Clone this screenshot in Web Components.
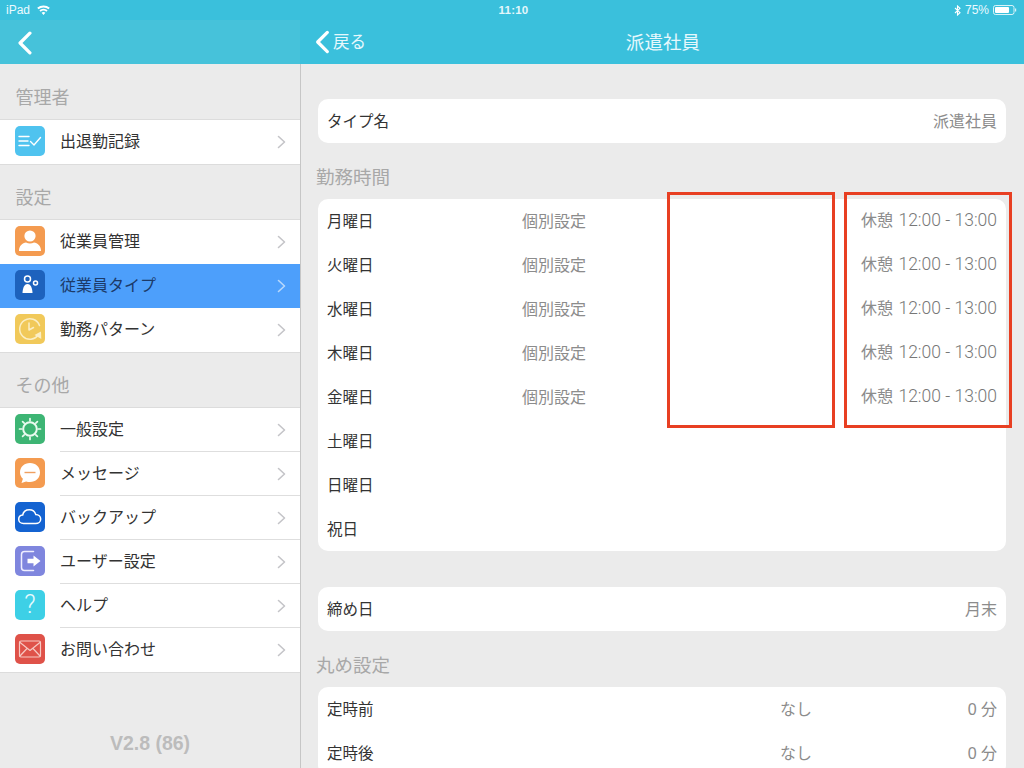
<!DOCTYPE html>
<html lang="ja">
<head>
<meta charset="utf-8">
<title>派遣社員</title>
<style>
  html, body { margin: 0; height: 100%; background: #ebebeb; }
  body { font-family: "Liberation Sans", "Noto Sans CJK JP", sans-serif; overflow: hidden; }
</style>
</head>
<body>
<app-shell>
  <status-bar slot="status"></status-bar>

  <nav-left slot="nav-left"></nav-left>
  <nav-right slot="nav-right" title-text="派遣社員" back="戻る"></nav-right>

  <side-menu slot="side">
    <side-section heading="管理者">
      <side-row icon="record" plain>出退勤記録</side-row>
    </side-section>
    <side-section heading="設定">
      <side-row icon="person" plain>従業員管理</side-row>
      <side-row icon="type" selected>従業員タイプ</side-row>
      <side-row icon="clock" plain>勤務パターン</side-row>
    </side-section>
    <side-section heading="その他">
      <side-row icon="gear">一般設定</side-row>
      <side-row icon="message">メッセージ</side-row>
      <side-row icon="cloud">バックアップ</side-row>
      <side-row icon="door">ユーザー設定</side-row>
      <side-row icon="help">ヘルプ</side-row>
      <side-row icon="mail" plain>お問い合わせ</side-row>
    </side-section>
    <version-label>V2.8 (86)</version-label>
  </side-menu>

  <detail-pane slot="main">
    <set-card>
      <set-row>タイプ名<span slot="end">派遣社員</span></set-row>
    </set-card>
    <set-heading>勤務時間</set-heading>
    <set-card>
      <set-row>月曜日<span slot="mid">個別設定</span><break-time slot="end" range="12:00 - 13:00"></break-time></set-row>
      <set-row>火曜日<span slot="mid">個別設定</span><break-time slot="end" range="12:00 - 13:00"></break-time></set-row>
      <set-row>水曜日<span slot="mid">個別設定</span><break-time slot="end" range="12:00 - 13:00"></break-time></set-row>
      <set-row>木曜日<span slot="mid">個別設定</span><break-time slot="end" range="12:00 - 13:00"></break-time></set-row>
      <set-row>金曜日<span slot="mid">個別設定</span><break-time slot="end" range="12:00 - 13:00"></break-time></set-row>
      <set-row>土曜日</set-row>
      <set-row>日曜日</set-row>
      <set-row>祝日</set-row>
    </set-card>
    <set-card style="margin-top:36px">
      <set-row>締め日<span slot="end">月末</span></set-row>
    </set-card>
    <set-heading>丸め設定</set-heading>
    <set-card style="--mid-col:453px">
      <set-row>定時前<span slot="mid">なし</span><span slot="end">0 分</span></set-row>
      <set-row>定時後<span slot="mid">なし</span><span slot="end">0 分</span></set-row>
    </set-card>
    <red-mark style="left:366px"></red-mark>
    <red-mark style="left:543px"></red-mark>
  </detail-pane>
</app-shell>

<script>
const CHEVRON_BACK = (h, w) => `<svg width="${w}" height="${h}" viewBox="0 0 14 22" fill="none" stroke="#fff" stroke-width="3" stroke-linecap="round" stroke-linejoin="round"><path d="M11.5 2 L2.5 11 L11.5 20"/></svg>`;

const ICONS = {
  record: { bg: '#4fc3ef', svg: `<g fill="none" stroke="#fff" stroke-width="1.4" stroke-linecap="round"><path d="M4 10.5h10M4 15h9M4 19.5h10"/><path d="M15.5 15.5l3.5 3.5 6.5-7.5"/></g>` },
  person: { bg: '#f49b50', svg: `<circle cx="15" cy="10" r="5.6" fill="#fff"/><path d="M4 25c0-5.500 3.500-7.800 7-8.500 2.500 1.300 5.500 1.300 8 0 3.500.7 7 3 7 8.500z" fill="#fff"/>` },
  type: { bg: '#1d62bd', svg: `<circle cx="12.500" cy="9" r="3" fill="none" stroke="#fff" stroke-width="1.500"/><path d="M7.500 23c.2-4.500 1.500-9 5-9s4.800 4.500 5 9z" fill="#fff"/><circle cx="20.500" cy="13" r="2" fill="none" stroke="#fff" stroke-width="1.500"/>` },
  clock: { bg: '#f1c95a', svg: `<g fill="none" stroke="#fbeec4" stroke-width="1.500" stroke-linecap="round" stroke-linejoin="round"><path d="M23.500 20.500A10.200 10.200 0 1 1 24.500 11.500"/><path d="M14 9v7l4.500-2.500"/></g><path d="M19.500 21l6.500-3.500.3 7.500z" fill="#fbeec4"/>` },
  gear: { bg: '#3db574', svg: `<g fill="none" stroke="#eafbf0" stroke-linecap="round"><circle cx="15" cy="15" r="6.800" stroke-width="2"/><path stroke-width="1.700" d="M15 4.500v2.200M15 23.300v2.200M4.500 15h2.200M23.300 15h2.200M7.600 7.600l1.600 1.600M20.800 20.800l1.600 1.600M7.600 22.400l1.600-1.600M20.800 9.200l1.600-1.600"/></g>` },
  message: { bg: '#f49b50', svg: `<path d="M15 5c5.800 0 10 4 10 9.500S20.800 24 15 24c-1.400 0-2.700-.2-3.900-.6L6.500 25l1.400-4.200C6 19 5 16.800 5 14.500 5 9 9.200 5 15 5z" fill="#fff"/><path d="M9.500 14.500h11" stroke="#f0a060" stroke-width="1.400"/>` },
  cloud: { bg: '#1463d1', svg: `<path d="M8.500 21.500c-2.800 0-4.800-1.900-4.800-4.300 0-2.300 1.800-4 4-4.200.6-3.200 3.300-5.300 6.600-5.300 3.100 0 5.600 1.900 6.400 4.700 2.800.1 5 2 5 4.500 0 2.600-2.100 4.600-5 4.600z" fill="none" stroke="#fff" stroke-width="1.500"/>` },
  door: { bg: '#7f86de', svg: `<path d="M18.500 5.500H9.500a3 3 0 0 0-3 3v13a3 3 0 0 0 3 3h9" fill="none" stroke="#eef" stroke-width="1.500" stroke-linecap="round"/><path d="M12.500 12.800h6V9.500l7 5.500-7 5.500v-3.300h-6z" fill="#fff"/>` },
  help: { bg: '#3dd0e6', text: '?' },
  mail: { bg: '#df5249', svg: `<g fill="none" stroke="#f7c9c3" stroke-width="1.200" stroke-linejoin="round"><rect x="4.500" y="7" width="21" height="16" rx="1.500"/><path d="M4.500 8l10.500 8.500L25.500 8M4.500 22.500l7.500-8M25.500 22.500l-7.500-8"/></g>` }
};

class AppShell extends HTMLElement {
  constructor() {
    super();
    this.attachShadow({ mode: 'open' });
    this.shadowRoot.innerHTML = `
      <style>
        :host { display: grid; width: 1024px; height: 768px; overflow: hidden; grid-template-columns: 300px 1fr; grid-template-rows: 20px 44px 704px; }
        .status { grid-column: 1 / 3; }
        .side { min-height: 0; overflow: hidden; display: flex; }
        .main { min-height: 0; overflow: hidden; display: flex; border-left: 1px solid #c6c6c6; }
      </style>
      <div class="status"><slot name="status"></slot></div>
      <slot name="nav-left"></slot>
      <slot name="nav-right"></slot>
      <div class="side"><slot name="side"></slot></div>
      <div class="main"><slot name="main"></slot></div>
    `;
  }
}

class StatusBar extends HTMLElement {
  constructor() {
    super();
    this.attachShadow({ mode: 'open' });
    this.shadowRoot.innerHTML = `
      <style>
        :host { display: grid; grid-template-columns: 1fr auto 1fr; align-items: center; height: 20px; padding: 0 7px 0 6px; box-sizing: border-box; background: #3ac0dc; color: #eafaff; font-size: 12px; }
        .left, .right { display: flex; align-items: center; }
        .left { gap: 7px; }
        .right { justify-content: flex-end; gap: 4px; }
        .time { font-weight: 700; font-size: 11.500px; letter-spacing: .2px; margin-left: 4px; color: #e3f7fb; }
        svg { display: block; }
      </style>
      <div class="left">
        <span>iPad</span>
        <svg width="13" height="10" viewBox="0 0 13 10"><path d="M6.500 10L4.600 7.800a2.800 2.800 0 0 1 3.800 0zM3.600 6.700L2.400 5.300a6.200 6.200 0 0 1 8.200 0L9.400 6.700a4.400 4.400 0 0 0-5.800 0zM1.500 4.300L.2 2.800a9.500 9.500 0 0 1 12.600 0l-1.300 1.500a7.600 7.600 0 0 0-10 0z" fill="#fff"/></svg>
      </div>
      <div class="time">11:10</div>
      <div class="right">
        <svg width="7" height="11" viewBox="0 0 7 11" fill="none" stroke="#fff" stroke-width="1.100"><path d="M1 3l5 4.700L3.500 10V1L6 3.300 1 8"/></svg>
        <span>75%</span>
        <svg width="24" height="10" viewBox="0 0 24 10"><rect x=".5" y=".5" width="20.500" height="9" rx="2" fill="none" stroke="#fff" stroke-opacity=".8"/><rect x="2" y="2" width="14" height="6" rx="1" fill="#fff"/><rect x="22" y="3.500" width="1.200" height="3" fill="#fff" fill-opacity=".8"/></svg>
      </div>
    `;
  }
}

class NavLeft extends HTMLElement {
  constructor() {
    super();
    this.attachShadow({ mode: 'open' });
    this.shadowRoot.innerHTML = `
      <style>
        :host { display: flex; align-items: center; height: 44px; padding-left: 17px; box-sizing: border-box; background: #46c2da; }
        svg { display: block; margin-top: 1px; }
      </style>
      ${CHEVRON_BACK(24, 16)}
    `;
  }
}

class NavRight extends HTMLElement {
  constructor() {
    super();
    this.attachShadow({ mode: 'open' });
    this.shadowRoot.innerHTML = `
      <style>
        :host { display: grid; grid-template-columns: 1fr auto 1fr; align-items: center; height: 44px; padding: 0 0 2px 15px; box-sizing: border-box; background: #3ac0dc; color: #e6f8fc; }
        .back { display: flex; align-items: center; gap: 3px; font-size: 16.500px; }
        .title { font-size: 18.500px; margin-left: -13px; letter-spacing: .1px; }
        svg { display: block; margin-top: 2px; }
      </style>
      <div class="back">${CHEVRON_BACK(24, 15)}<span>${this.getAttribute('back')}</span></div>
      <div class="title">${this.getAttribute('title-text')}</div>
      <div></div>
    `;
  }
}

class SideMenu extends HTMLElement {
  constructor() {
    super();
    this.attachShadow({ mode: 'open' });
    this.shadowRoot.innerHTML = `
      <style>
        :host { display: flex; flex-direction: column; flex: 1; padding-top: 1px; background: #ebebeb; }
      </style>
      <slot></slot>
    `;
  }
}

class SideSection extends HTMLElement {
  constructor() {
    super();
    this.attachShadow({ mode: 'open' });
    this.shadowRoot.innerHTML = `
      <style>
        :host { display: block; }
        .head { padding: 21px 0 9px 15.500px; font-size: 18px; line-height: 24px; color: #a8a8a8; }
        .list { border-top: 1px solid #dcdcdc; border-bottom: 1px solid #dcdcdc; background: #fff; }
      </style>
      <div class="head">${this.getAttribute('heading')}</div>
      <div class="list"><slot></slot></div>
    `;
  }
}

class SideRow extends HTMLElement {
  constructor() {
    super();
    this.attachShadow({ mode: 'open' });
    const ic = ICONS[this.getAttribute('icon')];
    const glyph = ic.text
      ? `<span class="q">${ic.text}</span>`
      : `<svg width="30" height="30" viewBox="0 0 30 30">${ic.svg}</svg>`;
    this.shadowRoot.innerHTML = `
      <style>
        :host { display: flex; align-items: stretch; height: 44px; background: #fff; color: #333; font-size: 16px; }
        :host([selected]) { background: #4d9ffb; color: #1c3a68; }
        .icon { flex: none; width: 30px; height: 30px; margin: 6px 15px 8px 15px; border-radius: 5px; background: ${ic.bg}; display: flex; align-items: center; justify-content: center; }
        .icon svg { display: block; }
        .q { color: #e8fbfe; font-family: Roboto, sans-serif; font-weight: 300; font-size: 25px; line-height: 30px; }
        .body { flex: 1; display: flex; align-items: center; justify-content: space-between; border-bottom: 1px solid #dedede; padding-right: 14px; }
        .label { padding-bottom: 4px; }
        :host([plain]) .body, :host([selected]) .body { border-bottom-color: transparent; }
        .chev { display: block; }
        :host([selected]) .chev { stroke: #b9d8fb; }
      </style>
      <div class="icon">${glyph}</div>
      <div class="body">
        <span class="label"><slot></slot></span>
        <svg class="chev" width="9" height="14" viewBox="0 0 9 14" fill="none" stroke="#c4c4c8" stroke-width="1.600" stroke-linecap="round" stroke-linejoin="round"><path d="M1.500 1.500L7.500 7l-6 5.500"/></svg>
      </div>
    `;
  }
}

class VersionLabel extends HTMLElement {
  constructor() {
    super();
    this.attachShadow({ mode: 'open' });
    this.shadowRoot.innerHTML = `
      <style>
        :host { display: block; margin-top: auto; padding-bottom: 15px; text-align: center; font-weight: 700; font-size: 19.500px; line-height: 20px; color: #bcbcbc; }
      </style>
      <slot></slot>
    `;
  }
}

class DetailPane extends HTMLElement {
  constructor() {
    super();
    this.attachShadow({ mode: 'open' });
    this.shadowRoot.innerHTML = `
      <style>
        :host { display: block; position: relative; flex: 1; padding: 35px 18px 0 17px; background: #ebebeb; }
      </style>
      <slot></slot>
    `;
  }
}

class SetHeading extends HTMLElement {
  constructor() {
    super();
    this.attachShadow({ mode: 'open' });
    this.shadowRoot.innerHTML = `
      <style>
        :host { display: block; margin-left: -2px; padding: 23px 0 9px; font-size: 18.500px; line-height: 24px; color: #a8a8a8; }
      </style>
      <slot></slot>
    `;
  }
}

class SetCard extends HTMLElement {
  constructor() {
    super();
    this.attachShadow({ mode: 'open' });
    this.shadowRoot.innerHTML = `
      <style>
        :host { display: block; background: #fff; border-radius: 10px; overflow: hidden; }
      </style>
      <slot></slot>
    `;
  }
}

class SetRow extends HTMLElement {
  constructor() {
    super();
    this.attachShadow({ mode: 'open' });
    this.shadowRoot.innerHTML = `
      <style>
        :host { display: grid; grid-template-columns: var(--mid-col, 195px) 1fr auto; align-items: center; height: 44px; padding: 0 9px; color: #333; font-size: 15.500px; }
        .label, .val { padding-bottom: 2px; }
        .val { color: #8c8c8c; font-size: 16px; white-space: nowrap; }
      </style>
      <div class="label"><slot></slot></div>
      <div class="val"><slot name="mid"></slot></div>
      <div class="val"><slot name="end"></slot></div>
    `;
  }
}

class BreakTime extends HTMLElement {
  constructor() {
    super();
    this.attachShadow({ mode: 'open' });
    this.shadowRoot.innerHTML = `
      <style>
        :host { display: inline-block; padding-bottom: 2px; }
        .range { font-family: Roboto, "Liberation Sans", sans-serif; font-weight: 300; font-size: 17.500px; color: #777; margin-left: 1px; }
      </style>
      休憩 <span class="range">${this.getAttribute('range')}</span>
    `;
  }
}

// annotation boxes drawn over the screenshot
class RedMark extends HTMLElement {
  constructor() {
    super();
    this.attachShadow({ mode: 'open' });
    this.shadowRoot.innerHTML = `
      <style>
        :host { display: block; position: absolute; top: 128px; width: 168px; height: 236px; box-sizing: border-box; border: 3px solid #e83f22; }
      </style>
    `;
  }
}

customElements.define('app-shell', AppShell);
customElements.define('status-bar', StatusBar);
customElements.define('nav-left', NavLeft);
customElements.define('nav-right', NavRight);
customElements.define('side-menu', SideMenu);
customElements.define('side-section', SideSection);
customElements.define('side-row', SideRow);
customElements.define('version-label', VersionLabel);
customElements.define('detail-pane', DetailPane);
customElements.define('set-heading', SetHeading);
customElements.define('set-card', SetCard);
customElements.define('set-row', SetRow);
customElements.define('break-time', BreakTime);
customElements.define('red-mark', RedMark);
</script>
</body>
</html>
